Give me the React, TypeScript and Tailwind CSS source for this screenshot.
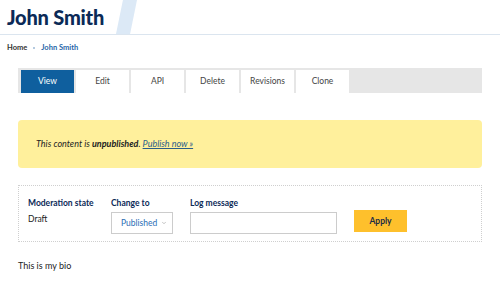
import { ChevronDown } from "lucide-react"

const tabs = ["View", "Edit", "API", "Delete", "Revisions", "Clone"]

export default function App() {
  return (
    <div className="w-[500px] h-[292px] bg-white overflow-hidden text-[#222]" style={{ fontFamily: "Lato, 'Noto Sans', sans-serif" }}>
      {/* Header */}
      <div className="relative h-[35px] border-b border-[#dbe5ef]">
        <div className="absolute left-[116px] top-0 h-[34px] w-[21px] bg-[#dce9f6] [clip-path:polygon(33%_0,100%_0,67%_100%,0_100%)]" />
        <h1 className="relative pl-[7px] pt-[5px] text-[20px] leading-[24px] font-black text-[#0b2a57] tracking-[-0.2px]">John Smith</h1>
      </div>

      {/* Breadcrumb */}
      <div className="flex items-center gap-[6px] pl-[7px] pt-[8px] text-[7.5px] font-bold leading-[10px]">
        <span className="text-[#333]">Home</span>
        <span className="w-[2px] h-[2px] rounded-full bg-[#9bb8d6]" />
        <span className="text-[#1f66a8]">John Smith</span>
      </div>

      {/* Tabs */}
      <div className="mx-[18px] mt-[15px] h-[25px] bg-[#e6e6e6] flex items-end gap-[2px] pl-[3px]">
        {tabs.map((t, i) => (
          <div
            key={t}
            className={`w-[53px] h-[23px] flex items-center justify-center text-[8.5px] ${
              i === 0 ? "bg-[#0f5f9e] text-white" : "bg-white text-[#444]"
            }`}
          >
            {t}
          </div>
        ))}
      </div>

      {/* Unpublished notice */}
      <div className="mx-[18px] mt-[27px] h-[48px] rounded-[4px] bg-[#fff09c] flex items-center pl-[18px] text-[9px] italic text-[#222]">
        <span>
          This content is <b className="font-bold">unpublished</b>.{" "}
          <span className="underline text-[#2a5d8a]">Publish now »</span>
        </span>
      </div>

      {/* Moderation form */}
      <div className="mx-[18px] mt-[17px] h-[57px] border border-dotted border-[#cfcfcf] flex pl-[9px] pt-[11px] gap-0">
        <div className="w-[83px]">
          <div className="text-[8.5px] font-bold text-[#0b2a57] leading-[12px]">Moderation state</div>
          <div className="text-[8.5px] text-[#222] mt-[4px]">Draft</div>
        </div>
        <div className="w-[79px]">
          <div className="text-[8.5px] font-bold text-[#0b2a57] leading-[12px]">Change to</div>
          <div className="mt-[3px] w-[62px] h-[22px] border border-[#cccccc] flex items-center pl-[9px] pr-[5px] justify-between text-[8.5px] text-[#2a6db5]">
            <span>Published</span>
            <ChevronDown className="w-[6px] h-[6px] text-[#888]" strokeWidth={2} />
          </div>
        </div>
        <div className="w-[164px]">
          <div className="text-[8.5px] font-bold text-[#0b2a57] leading-[12px]">Log message</div>
          <div className="mt-[3px] w-[147px] h-[22px] border border-[#cccccc]" />
        </div>
        <div className="pt-[13px]">
          <div className="w-[53px] h-[22px] bg-[#fec02c] flex items-center justify-center text-[8.5px] font-bold text-[#1b2b45]">Apply</div>
        </div>
      </div>

      {/* Bio */}
      <div className="pl-[18px] pt-[17px] text-[9px] text-[#222]">This is my bio</div>
    </div>
  )
}
